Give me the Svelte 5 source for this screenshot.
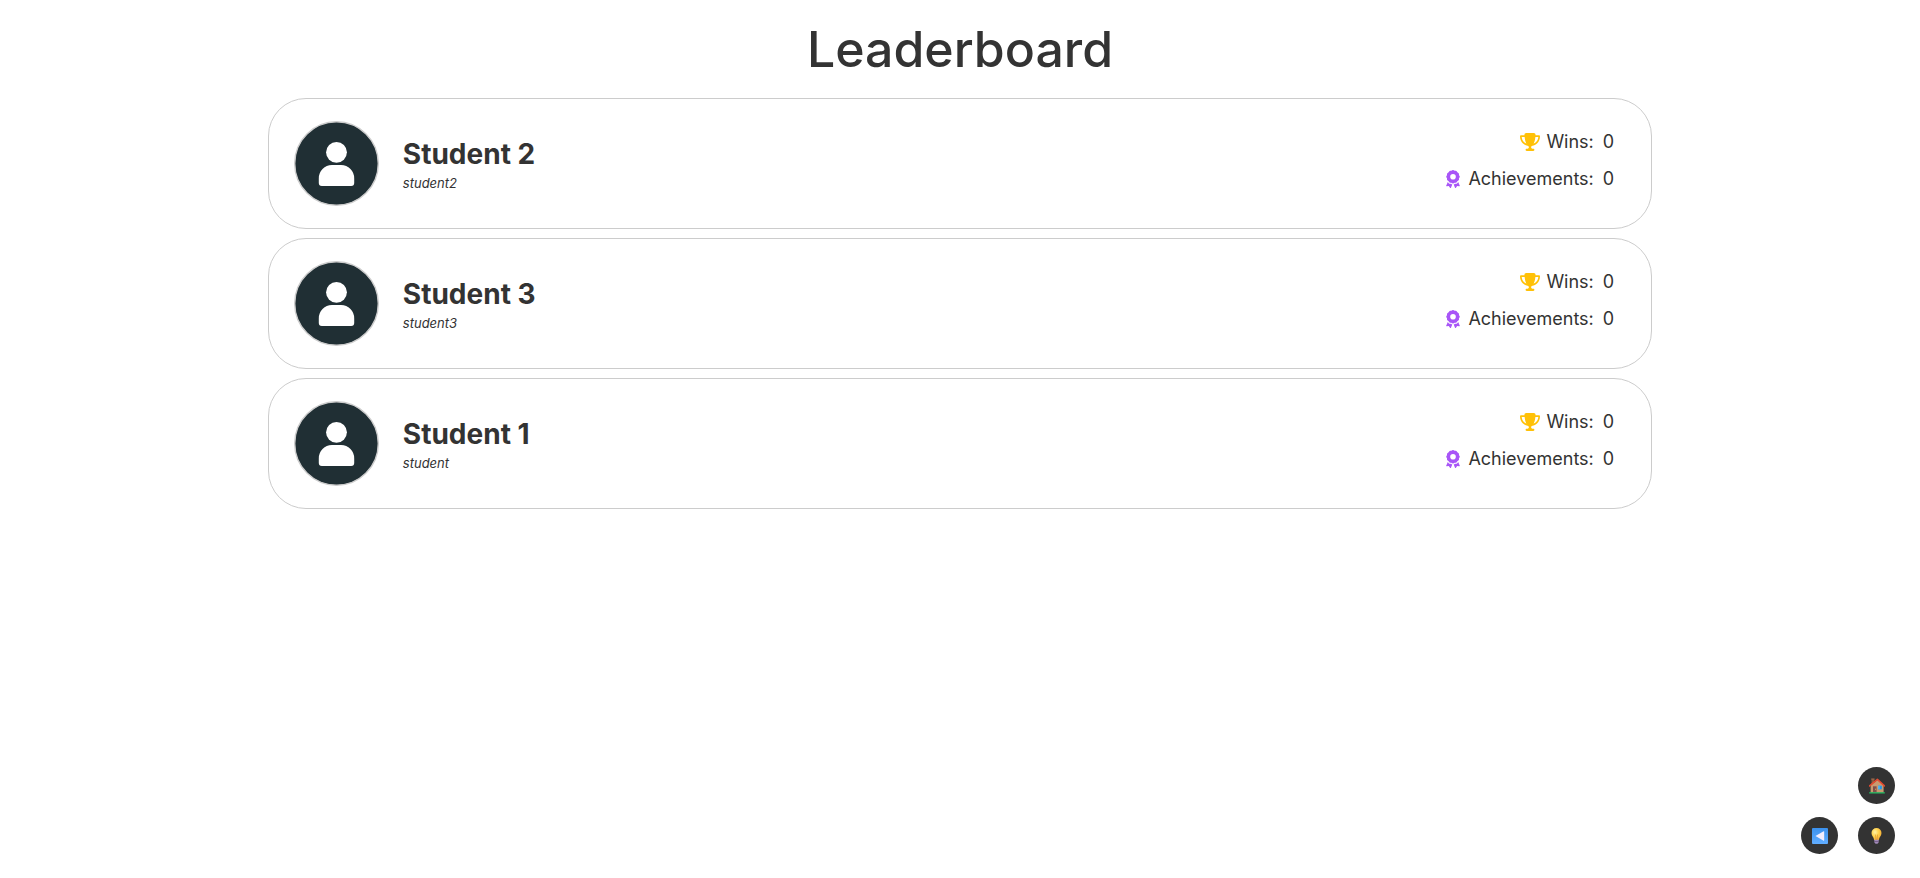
<script>
  const students = [
    { name: 'Student 2', username: 'student2', wins: 0, achievements: 0 },
    { name: 'Student 3', username: 'student3', wins: 0, achievements: 0 },
    { name: 'Student 1', username: 'student', wins: 0, achievements: 0 }
  ];
</script>

<main>
  <h1>Leaderboard</h1>
  <ol class="board">
    {#each students as s (s.username)}
      <li class="card">
        <svg class="avatar" viewBox="0 0 84 84" aria-hidden="true">
          <circle cx="42" cy="42" r="41.3" fill="#202f34" stroke="#ccc" stroke-width="1.400" />
          <circle cx="42" cy="31" r="10.3" fill="#fff" />
          <path d="M24.5 61.2v-4.4A13 13 0 0 1 37.5 43.5h9a13 13 0 0 1 13 13.3v4.4a3 3 0 0 1-3 3h-29a3 3 0 0 1-3-3z" fill="#fff" />
        </svg>
        <div class="who">
          <h2>{s.name}</h2>
          <em>{s.username}</em>
        </div>
        <dl class="stats">
          <div class="stat">
            <svg class="trophy" viewBox="0 0 576 512" fill="#ffc107" aria-hidden="true">
              <path d="M400 0H176c-26.500 0-48.100 21.800-47.100 48.200.2 5.300.4 10.600.7 15.800H24C10.700 64 0 74.700 0 88c0 92.600 33.500 157 78.500 200.700 44.300 43.100 98.300 64.800 138.100 75.800 23.400 6.500 39.400 26 39.400 45.600 0 20.900-17 37.900-37.900 37.900H192c-17.700 0-32 14.300-32 32s14.300 32 32 32h192c17.700 0 32-14.300 32-32s-14.300-32-32-32h-26.100c-20.900 0-37.900-17-37.900-37.900 0-19.600 15.900-39.200 39.400-45.600 39.900-11 93.900-32.700 138.200-75.800C542.500 245 576 180.600 576 88c0-13.300-10.700-24-24-24H446.400c.3-5.200.5-10.400.7-15.800C448.100 21.800 426.500 0 400 0zM48.900 112h84.400c9.100 90.100 29.200 150.300 51.900 190.600-24.900-11-50.800-26.500-73.200-48.300-32-31.100-58-76-63.100-142.300zm415.200 142.300c-22.400 21.800-48.300 37.300-73.200 48.300 22.700-40.300 42.800-100.500 51.900-190.600h84.400c-5.100 66.300-31.100 111.200-63.100 142.300z" />
            </svg>
            <dt>Wins:</dt>
            <dd>{s.wins}</dd>
          </div>
          <div class="stat">
            <svg class="award" viewBox="0 0 384 512" fill="#a855f7" aria-hidden="true">
              <path d="M173.800 5.500c11-7.300 25.400-7.300 36.400 0L228 17.200c6 3.900 13 5.800 20.100 5.400l21.300-1.300c13.200-.8 25.600 6.400 31.500 18.200l9.600 19.100c3.200 6.400 8.400 11.500 14.700 14.700l19.300 9.700c11.800 5.900 19 18.300 18.200 31.500l-1.300 21.300c-.4 7.100 1.500 14.200 5.400 20.100l11.800 17.800c7.300 11 7.300 25.400 0 36.400L366.800 228c-3.900 6-5.800 13-5.400 20.100l1.300 21.300c.8 13.200-6.400 25.600-18.200 31.500l-19.100 9.600c-6.400 3.200-11.500 8.400-14.700 14.700l-9.700 19.300c-5.900 11.800-18.300 19-31.500 18.200l-21.300-1.300c-7.100-.4-14.200 1.500-20.100 5.400l-17.800 11.800c-11 7.300-25.400 7.300-36.400 0L156 366.800c-6-3.900-13-5.800-20.100-5.400l-21.300 1.300c-13.200.8-25.600-6.400-31.500-18.200l-9.600-19.100c-3.200-6.400-8.400-11.500-14.700-14.700l-19.300-9.700c-11.800-5.900-19-18.300-18.200-31.500l1.300-21.300c.4-7.100-1.500-14.200-5.400-20.100L5.500 210.200c-7.300-11-7.300-25.400 0-36.400L17.200 156c3.900-6 5.800-13 5.400-20.100l-1.300-21.300c-.8-13.200 6.400-25.600 18.200-31.500l19.100-9.600C65 70.200 70.200 65 73.400 58.600l9.700-19.300c5.900-11.800 18.300-19 31.500-18.200l21.300 1.300c7.100.4 14.200-1.500 20.100-5.400l17.800-11.500zM272 192a80 80 0 1 0-160 0 80 80 0 1 0 160 0zM1.300 441.800 44.400 339.300c.2.100.3.200.4.400l9.600 19.100c11.700 23.200 36 37.300 62 35.800l21.300-1.300c.2 0 .5 0 .7.200l17.800 11.800c5.100 3.300 10.500 5.900 16.100 7.700l-37.600 89.300c-2.300 5.500-7.400 9.200-13.300 9.700s-11.600-2.200-14.800-7.200l-34.500-52.700-56.100 8.200c-5.700.8-11.400-1.500-15-6s-4.300-10.700-2.100-16zm248 60.400L211.700 413c5.600-1.800 11-4.300 16.100-7.700l17.800-11.800c.2-.1.4-.2.700-.2l21.300 1.300c26 1.500 50.300-12.600 62-35.800l9.600-19.100c.1-.2.2-.3.400-.4l43.200 102.500c2.200 5.300 1.400 11.400-2.100 16s-9.300 6.900-15 6l-56.100-8.200-34.500 52.700c-3.200 4.900-8.900 7.700-14.800 7.200s-11-4.300-13.300-9.700z" />
            </svg>
            <dt>Achievements:</dt>
            <dd>{s.achievements}</dd>
          </div>
        </dl>
      </li>
    {/each}
  </ol>
</main>

<nav class="tools">
  <button class="home" aria-label="Home">
    <svg viewBox="0 0 16 16" aria-hidden="true">
      <path d="M2.500 1h2.800v5H2.500z" fill="#8b5a3c" />
      <path d="M2.200.5h3.400v1H2.200z" fill="#a86f4e" />
      <path d="M1.600 7.500 8.500 2l6.100 5.500v7.200h-13z" fill="#c99a70" />
      <path d="M4 8.300h3.600v6.400H4z" fill="#80504a" />
      <path d="M6 10.800h1v1H6z" fill="#d6a05f" />
      <path d="M9 7.700h3.900v3.600H9z" fill="#2998e6" />
      <path d="M9 7.700h1.800v3.600H9z" fill="#51b5f2" />
      <path d="M.6 7.900 8.400 1.400l7 6.500" fill="none" stroke="#e64b31" stroke-width="1.500" stroke-linecap="round" stroke-linejoin="round" />
      <path d="M.2 14.200h15.600v1.300H.2z" fill="#22bd65" />
    </svg>
  </button>
  <button class="back" aria-label="Back">
    <svg viewBox="0 0 16 16" aria-hidden="true">
      <defs>
        <linearGradient id="tile" x2="0" y2="1">
          <stop stop-color="#3b91ed" /><stop offset="1" stop-color="#61adff" />
        </linearGradient>
      </defs>
      <rect width="16" height="16" rx="1" fill="url(#tile)" />
      <path d="M3.500 8 11.600 3.300q.6-.2.600.4v8.600q0 .6-.6.400z" fill="#f3eeff" />
    </svg>
  </button>
  <button class="hint" aria-label="Hint">
    <svg viewBox="0 0 16 16" aria-hidden="true">
      <defs>
        <radialGradient id="glass" cx=".35" cy=".35" r=".7">
          <stop stop-color="#fff0a3" /><stop offset=".5" stop-color="#ffd34e" /><stop offset="1" stop-color="#f4ac35" />
        </radialGradient>
      </defs>
      <path d="M7.500 0a5 5 0 0 1 5 5c0 3-2.400 4-2.600 7H5.100C4.900 9 2.500 8 2.500 5a5 5 0 0 1 5-5z" fill="url(#glass)" />
      <path d="M6.400 6.500 7 12h1l.6-5.500" fill="none" stroke="#d98b2b" stroke-width=".6" />
      <path d="M5.200 11.800h4.600l-.3 2.700-1 1.300h-2l-1-1.300z" fill="#a18ab8" />
      <path d="M5.300 13.500h4.300" stroke="#665078" stroke-width=".7" />
    </svg>
  </button>
</nav>

<style>
  :global(body) {
    background: #fff;
    color: #333;
    font-family: Inter, "Open Sans", sans-serif;
  }
  main {
    box-sizing: border-box;
    width: 72.1%;
    margin: 0 auto;
    padding-top: 18px;
  }
  h1 {
    margin: 0 0 18px;
    font-size: 50px;
    line-height: 62px;
    font-weight: 500;
    text-align: center;
  }
  .board {
    display: flex;
    flex-direction: column;
    gap: 9px;
    margin: 0;
    padding: 0;
    list-style: none;
  }
  .card {
    display: flex;
    align-items: flex-start;
    border: 1px solid #ccc;
    border-radius: 38px;
    padding: 22px 37px 22px 25px;
  }
  .avatar {
    flex: none;
    width: 85px;
    height: 85px;
  }
  .who {
    flex: 1;
    display: flex;
    flex-direction: column;
    padding: 15px 24px 0;
  }
  h2 {
    margin: 0;
    font-size: 28px;
    line-height: 36px;
    font-weight: 700;
  }
  em {
    font-size: 13px;
    line-height: 22px;
  }
  .stats {
    display: flex;
    flex-direction: column;
    align-items: flex-end;
    gap: 12px;
    margin: 0;
    padding-top: 8px;
  }
  .stat {
    display: flex;
    align-items: center;
    font-size: 18px;
    line-height: 25px;
  }
  dt {
    margin-right: 9px;
  }
  dd {
    margin: 0;
  }
  .trophy {
    width: 20px;
    height: 18px;
    margin-right: 6px;
  }
  .award {
    width: 14px;
    height: 18px;
    margin-right: 8px;
  }
  .tools {
    position: fixed;
    right: 25px;
    bottom: 24px;
    display: grid;
    grid-template-columns: 37px 37px;
    gap: 13px 20px;
  }
  .home {
    grid-column: 2;
  }
  button {
    display: grid;
    place-items: center;
    width: 37px;
    height: 37px;
    border: 0;
    border-radius: 50%;
    padding: 0;
    background: #333;
    cursor: pointer;
  }
  button svg {
    width: 16px;
    height: 16px;
  }
</style>
